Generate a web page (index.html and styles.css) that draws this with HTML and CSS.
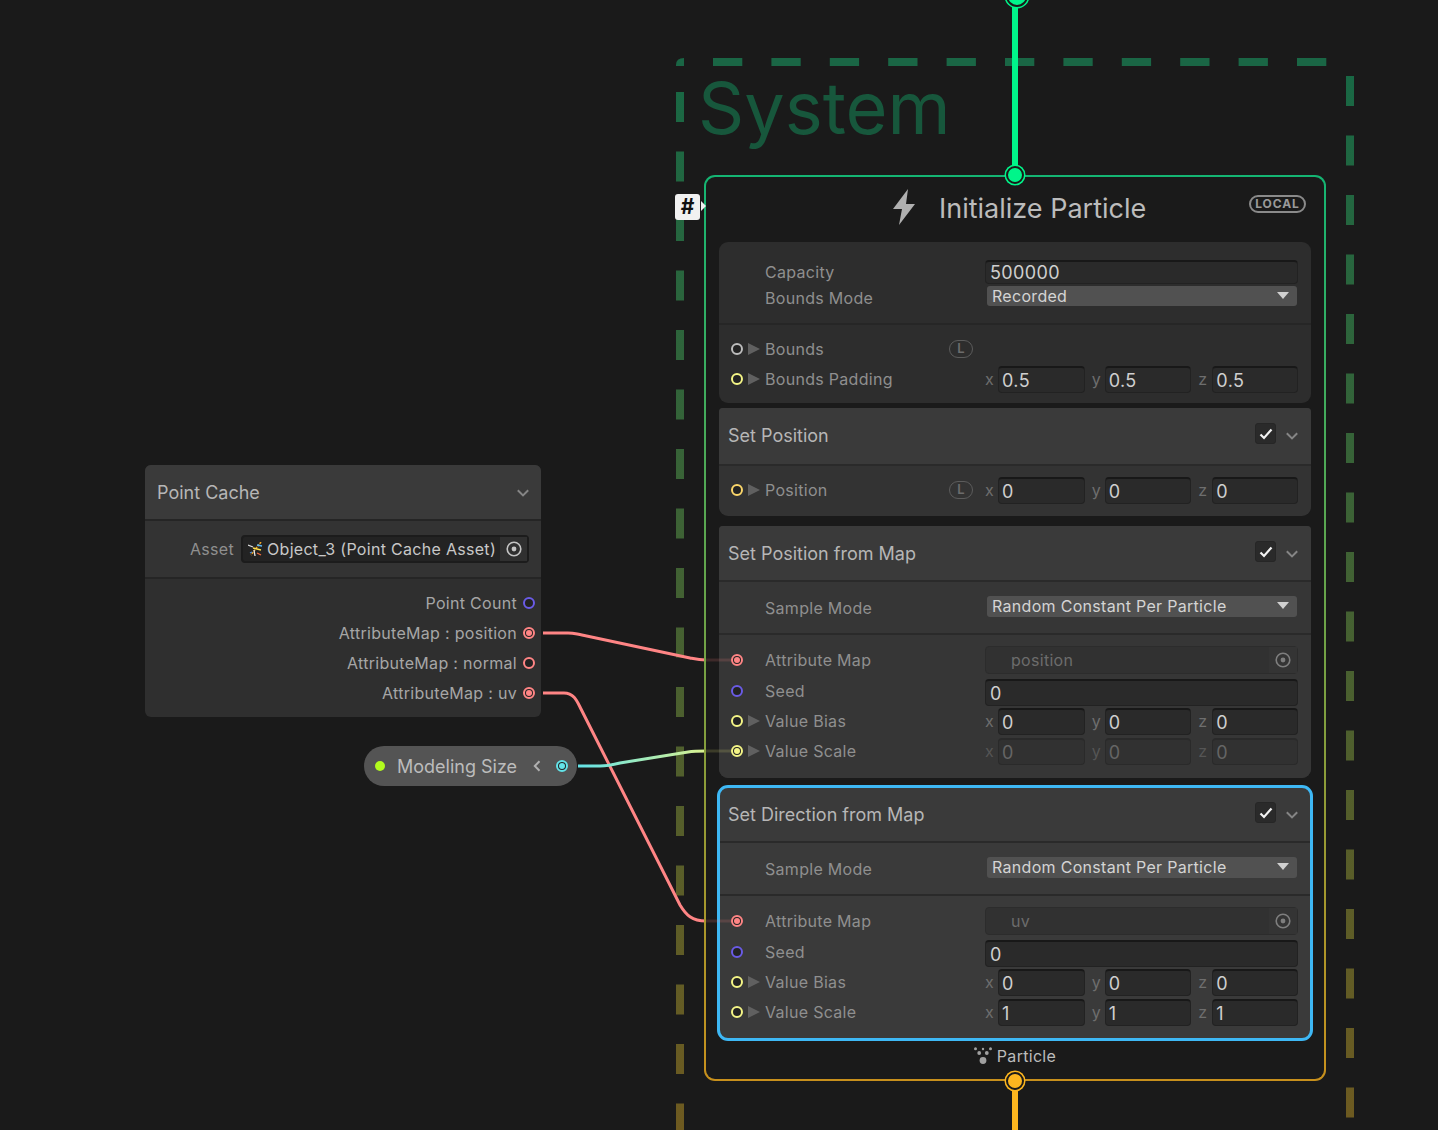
FILE: index.html
```html
<!DOCTYPE html>
<html lang="en">
<head>
<meta charset="utf-8">
<title>Initialize Particle</title>
<link rel="stylesheet" href="styles.css">
</head>
<body>
<main class="canvas">
  <svg class="layer" width="1438" height="1130" viewBox="0 0 1438 1130" fill="none">
    <defs>
      <linearGradient id="frameGrad" gradientUnits="userSpaceOnUse" x1="0" y1="58" x2="0" y2="1130">
        <stop offset="0" stop-color="#176845"/>
        <stop offset="1" stop-color="#6e5a20"/>
      </linearGradient>
      <linearGradient id="sizeWire" gradientUnits="userSpaceOnUse" x1="578" y1="0" x2="730" y2="0">
        <stop offset="0" stop-color="#63e3e8"/>
        <stop offset="1" stop-color="#f2f57f"/>
      </linearGradient>
    </defs>
    <path d="M676 66 V65 Q676 58 684 58 V66 Z" fill="#1a6645"/>
    <path d="M713 62 H1327" stroke="#1a6645" stroke-width="8" stroke-dasharray="29.3 29.1"/>
    <path d="M680 92 V1130" stroke="url(#frameGrad)" stroke-width="8" stroke-dasharray="30 29.5"/>
    <path d="M1350 76 V1130" stroke="url(#frameGrad)" stroke-width="8" stroke-dasharray="30 29.5"/>
    <path class="wire" d="M543 633 H568 C574 633 576 634 582 635 L690 658 C695 659 699 660 706 660" stroke="#ff8585"/>
    <path class="wire" d="M543 693 H564 C574 693 577 701 581 709 L680 905 C686 915 692 921 706 921" stroke="#ff8585"/>
    <path class="wire" d="M578 766 H600 C608 766 612 765 620 763 L688 752 C694 751 699 751 706 751" stroke="url(#sizeWire)"/>
  </svg>

  <h1 class="system-title">System</h1>

  <div class="flow flow-in"></div>
  <div class="flow flow-out"></div>

  <section class="node point-cache">
    <header class="block-title">
      <span class="title-text">Point Cache</span>
      <svg class="chevron" width="12" height="8" viewBox="0 0 12 8" fill="none"><path d="M.8 1.2 6 6.4l5.2-5.2" stroke="#858585" stroke-width="2"/></svg>
    </header>
    <div class="asset-row">
      <span class="label">Asset</span>
      <div class="object-field">
        <svg class="asset-icon" width="15" height="15" viewBox="0 0 15 15" fill="none">
          <path d="M0 3l5 2" stroke="#dcdcdc" stroke-width="1.3"/>
          <path d="M13 0 3 13" stroke="#f5a623" stroke-width="1.5" stroke-dasharray="2.2 1"/>
          <path d="M5 6l8 2" stroke="#ffe14d" stroke-width="1.3"/>
          <path d="M6 8l1 6" stroke="#e8e8e8" stroke-width="1.3"/>
          <path d="M9 3l5 1" stroke="#5bb8f5" stroke-width="1.3"/>
          <path d="M9 11l4 2" stroke="#f56b3c" stroke-width="1.3"/>
          <path d="M2 11l2-1" stroke="#4d8fe0" stroke-width="1.3"/>
        </svg>
        <span class="object-name">Object_3 (Point Cache Asset)</span>
        <span class="object-target">
          <svg width="16" height="16" viewBox="0 0 16 16" fill="none"><circle cx="8" cy="8" r="6.8" stroke="#c4c4c4" stroke-width="1.6"/><circle cx="8" cy="8" r="2.4" fill="#c4c4c4"/></svg>
        </span>
      </div>
    </div>
    <div class="outputs">
      <div class="output"><span>Point Count</span><i class="port p-int"></i></div>
      <div class="output"><span>AttributeMap : position</span><i class="port p-map on"></i></div>
      <div class="output"><span>AttributeMap : normal</span><i class="port p-map"></i></div>
      <div class="output"><span>AttributeMap : uv</span><i class="port p-map on"></i></div>
    </div>
  </section>

  <div class="node pill">
    <i class="pill-dot"></i>
    <span class="pill-text">Modeling Size</span>
    <svg class="pill-chevron" width="8" height="12" viewBox="0 0 8 12" fill="none"><path d="M6.5 1.2 1.8 6l4.7 4.8" stroke="#b0b0b0" stroke-width="2"/></svg>
    <i class="port p-float on"></i>
  </div>

  <section class="node context">
    <header class="context-head">
      <svg class="bolt" width="24" height="36" viewBox="0 0 24 36"><path d="M16 0 1 20h9L7 36 23 15h-9z" fill="#b0b0b0"/></svg>
      <h2 class="context-title">Initialize Particle</h2>
      <span class="local">LOCAL</span>
    </header>

    <div class="block block-settings">
      <div class="sect sect-props">
        <div class="prop"><span class="label">Capacity</span><div class="input input-top">500000</div></div>
        <div class="prop"><span class="label">Bounds Mode</span><div class="select select-thin">Recorded<i class="caret"></i></div></div>
      </div>
      <div class="sect sect-rows">
        <div class="row">
          <i class="port p-bounds"></i><i class="tri"></i><span class="label">Bounds</span><span class="lock">L</span>
        </div>
        <div class="row">
          <i class="port p-vec"></i><i class="tri"></i><span class="label">Bounds Padding</span><span></span>
          <div class="vec">
            <div class="cell"><span class="axis">x</span><div class="input">0.5</div></div>
            <div class="cell"><span class="axis">y</span><div class="input">0.5</div></div>
            <div class="cell"><span class="axis">z</span><div class="input">0.5</div></div>
          </div>
        </div>
      </div>
    </div>

    <div class="block block-position">
      <header class="block-title block-title-tall">
        <span class="title-text">Set Position</span>
        <span class="check"><svg width="14" height="12" viewBox="0 0 14 12" fill="none"><path d="M1.5 6.5 5 10l7.5-8.5" stroke="#f2f2f2" stroke-width="2.2"/></svg></span>
        <svg class="chevron" width="12" height="8" viewBox="0 0 12 8" fill="none"><path d="M.8 1.2 6 6.4l5.2-5.2" stroke="#858585" stroke-width="2"/></svg>
      </header>
      <div class="sect sect-rows sect-single">
        <div class="row">
          <i class="port p-pos"></i><i class="tri"></i><span class="label">Position</span><span class="lock">L</span>
          <div class="vec">
            <div class="cell"><span class="axis">x</span><div class="input">0</div></div>
            <div class="cell"><span class="axis">y</span><div class="input">0</div></div>
            <div class="cell"><span class="axis">z</span><div class="input">0</div></div>
          </div>
        </div>
      </div>
    </div>

    <div class="block block-map">
      <header class="block-title">
        <span class="title-text">Set Position from Map</span>
        <span class="check"><svg width="14" height="12" viewBox="0 0 14 12" fill="none"><path d="M1.5 6.5 5 10l7.5-8.5" stroke="#f2f2f2" stroke-width="2.2"/></svg></span>
        <svg class="chevron" width="12" height="8" viewBox="0 0 12 8" fill="none"><path d="M.8 1.2 6 6.4l5.2-5.2" stroke="#858585" stroke-width="2"/></svg>
      </header>
      <div class="sect sect-props sect-sample">
        <div class="prop"><span class="label">Sample Mode</span><div class="select">Random Constant Per Particle<i class="caret"></i></div></div>
      </div>
      <div class="sect sect-rows sect-map">
        <div class="row">
          <i class="port p-map on"></i><i></i><span class="label">Attribute Map</span><span></span>
          <div class="target-field"><span>position</span><span class="target-btn"><svg width="16" height="16" viewBox="0 0 16 16" fill="none"><circle cx="8" cy="8" r="6.8" stroke="#7e7e7e" stroke-width="1.6"/><circle cx="8" cy="8" r="2.4" fill="#7e7e7e"/></svg></span></div>
        </div>
        <div class="row row-seed">
          <i class="port p-int"></i><i></i><span class="label">Seed</span><span></span>
          <div class="input input-seed">0</div>
        </div>
        <div class="row">
          <i class="port p-vec"></i><i class="tri"></i><span class="label">Value Bias</span><span></span>
          <div class="vec">
            <div class="cell"><span class="axis">x</span><div class="input">0</div></div>
            <div class="cell"><span class="axis">y</span><div class="input">0</div></div>
            <div class="cell"><span class="axis">z</span><div class="input">0</div></div>
          </div>
        </div>
        <div class="row">
          <i class="port p-vec on"></i><i class="tri"></i><span class="label">Value Scale</span><span></span>
          <div class="vec vec-off">
            <div class="cell"><span class="axis">x</span><div class="input">0</div></div>
            <div class="cell"><span class="axis">y</span><div class="input">0</div></div>
            <div class="cell"><span class="axis">z</span><div class="input">0</div></div>
          </div>
        </div>
      </div>
    </div>

    <div class="block block-map block-selected">
      <header class="block-title">
        <span class="title-text">Set Direction from Map</span>
        <span class="check"><svg width="14" height="12" viewBox="0 0 14 12" fill="none"><path d="M1.5 6.5 5 10l7.5-8.5" stroke="#f2f2f2" stroke-width="2.2"/></svg></span>
        <svg class="chevron" width="12" height="8" viewBox="0 0 12 8" fill="none"><path d="M.8 1.2 6 6.4l5.2-5.2" stroke="#858585" stroke-width="2"/></svg>
      </header>
      <div class="sect sect-props sect-sample">
        <div class="prop"><span class="label">Sample Mode</span><div class="select">Random Constant Per Particle<i class="caret"></i></div></div>
      </div>
      <div class="sect sect-rows sect-map">
        <div class="row">
          <i class="port p-map on"></i><i></i><span class="label">Attribute Map</span><span></span>
          <div class="target-field"><span>uv</span><span class="target-btn"><svg width="16" height="16" viewBox="0 0 16 16" fill="none"><circle cx="8" cy="8" r="6.8" stroke="#7e7e7e" stroke-width="1.6"/><circle cx="8" cy="8" r="2.4" fill="#7e7e7e"/></svg></span></div>
        </div>
        <div class="row row-seed">
          <i class="port p-int"></i><i></i><span class="label">Seed</span><span></span>
          <div class="input input-seed">0</div>
        </div>
        <div class="row">
          <i class="port p-vec"></i><i class="tri"></i><span class="label">Value Bias</span><span></span>
          <div class="vec">
            <div class="cell"><span class="axis">x</span><div class="input">0</div></div>
            <div class="cell"><span class="axis">y</span><div class="input">0</div></div>
            <div class="cell"><span class="axis">z</span><div class="input">0</div></div>
          </div>
        </div>
        <div class="row">
          <i class="port p-vec"></i><i class="tri"></i><span class="label">Value Scale</span><span></span>
          <div class="vec">
            <div class="cell"><span class="axis">x</span><div class="input">1</div></div>
            <div class="cell"><span class="axis">y</span><div class="input">1</div></div>
            <div class="cell"><span class="axis">z</span><div class="input">1</div></div>
          </div>
        </div>
      </div>
    </div>

    <footer class="context-foot">
      <svg width="18" height="18" viewBox="0 0 18 18" fill="#a0a0a0">
        <circle cx="1.5" cy="1.8" r="1.5"/><circle cx="9" cy="2" r="1.2"/><circle cx="16.5" cy="1.8" r="1.5"/>
        <circle cx="5.2" cy="6" r="1.9"/><circle cx="12.8" cy="6" r="1.9"/>
        <circle cx="9" cy="13.5" r="3.4"/>
      </svg>
      <span>Particle</span>
    </footer>

    <i class="flow-port flow-port-in"></i>
    <i class="flow-port flow-port-out"></i>
    <div class="hash">#</div>
  </section>

  <svg class="layer layer-top" width="1438" height="1130" viewBox="0 0 1438 1130" fill="none">
    <path d="M706 660 H731" stroke="#ff8585" stroke-opacity=".16" stroke-width="3"/>
    <path d="M706 751 H731" stroke="#f2f57f" stroke-opacity=".16" stroke-width="3"/>
    <path d="M706 921 H731" stroke="#ff8585" stroke-opacity=".16" stroke-width="3"/>
  </svg>
</main>
</body>
</html>
```
FILE: styles.css
```css
* { box-sizing: border-box; }

html, body {
  margin: 0;
  height: 100%;
  background: #1a1a1a;
}

body {
  font-family: Inter, "Noto Sans", "Liberation Sans", sans-serif;
  font-size: 16px;
  letter-spacing: 0.3px;
  color: #8f8f8f;
  overflow: hidden;
}

i { display: block; font-style: normal; }

.canvas {
  position: relative;
  width: 1438px;
  height: 1130px;
  overflow: hidden;
}

.layer { position: absolute; left: 0; top: 0; }
.layer-top { pointer-events: none; }
.wire { stroke-width: 3; }

.system-title {
  position: absolute;
  left: 698px;
  top: 63px;
  margin: 0;
  font-size: 72px;
  line-height: 90px;
  font-weight: 400;
  letter-spacing: 0;
  color: #17573c;
}

.flow { position: absolute; left: 1012px; width: 6px; }
.flow-in { top: 0; height: 175px; background: #00f58a; }
.flow-in::after {
  content: "";
  position: absolute;
  left: -6px;
  top: -15px;
  width: 18px;
  height: 18px;
  border-radius: 50%;
  border: 2px solid #1a1a1a;
  background: #00f58a;
  box-shadow: 0 0 0 1.5px #00f58a;
}
.flow-out { top: 1081px; height: 49px; background: #fdb61f; }

.node { position: absolute; }

/* Point cache operator */
.point-cache {
  left: 145px;
  top: 465px;
  width: 396px;
  border-radius: 6px;
  overflow: hidden;
  background: #2f2f2f;
}

.block-title {
  display: flex;
  align-items: center;
  height: 54px;
  padding: 0 13px 0 9px;
  background: #3a3a3a;
}
.point-cache .block-title { padding: 0 12px; }

.title-text {
  flex: 1;
  font-size: 18px;
  letter-spacing: 0;
  color: #b6b6b6;
}

.chevron { flex: none; margin-top: 2px; }

.asset-row {
  display: flex;
  align-items: center;
  justify-content: flex-end;
  gap: 7px;
  height: 60px;
  padding: 0 12px;
  background: #333;
  border-top: 2px solid #252525;
  border-bottom: 2px solid #252525;
}

.object-field {
  display: flex;
  align-items: center;
  width: 288px;
  height: 28px;
  padding-left: 5px;
  background: #232323;
  border: 2px solid #1c1c1c;
  border-radius: 4px;
  color: #c8c8c8;
}
.asset-icon { flex: none; margin-right: 4px; }
.object-name { flex: 1; white-space: nowrap; }
.object-target {
  display: flex;
  align-items: center;
  justify-content: center;
  flex: none;
  width: 27px;
  height: 24px;
  background: #303030;
}

.outputs { padding: 9px 6px 9px 0; }
.output {
  display: flex;
  align-items: center;
  justify-content: flex-end;
  gap: 6px;
  height: 30px;
  color: #a6a6a6;
}

/* Ports */
.port {
  position: relative;
  flex: none;
  width: 12px;
  height: 12px;
  border-radius: 50%;
  border: 2px solid currentColor;
  background: #232323;
}
.port.on::after {
  content: "";
  position: absolute;
  inset: 1px;
  border-radius: 50%;
  background: currentColor;
}
.p-int { color: #6a5be6; }
.p-map { color: #ff8585; }
.p-bounds { color: #bdbdbd; }
.p-vec { color: #f4f586; }
.p-pos { color: #fbd66a; }
.p-float { color: #63e3e8; }

/* Pill */
.pill {
  left: 364px;
  top: 746px;
  display: flex;
  align-items: center;
  width: 213px;
  height: 40px;
  padding: 0 9px 0 11px;
  border-radius: 20px;
  background: #545454;
}
.pill-dot {
  flex: none;
  width: 10px;
  height: 10px;
  margin-top: -1px;
  border-radius: 50%;
  background: #b2fb1e;
}
.pill-text {
  flex: none;
  width: 136px;
  margin-left: 12px;
  font-size: 18px;
  letter-spacing: 0;
  color: #bcbcbc;
}
.pill-chevron { flex: none; margin-right: 15px; }

/* Context */
.context {
  left: 704px;
  top: 175px;
  width: 622px;
  height: 906px;
  display: flex;
  flex-direction: column;
  padding: 0 13px;
  border: 2px solid transparent;
  border-radius: 11px;
  background:
    linear-gradient(#1a1a1a, #1a1a1a) padding-box,
    linear-gradient(#14b573, #c8901c) border-box;
}

.context-head {
  position: relative;
  flex: none;
  display: flex;
  align-items: center;
  height: 65px;
}
.bolt { position: absolute; left: 173px; top: 12px; }
.context-title {
  position: absolute;
  left: 220px;
  top: 15px;
  margin: 0;
  font-size: 27px;
  line-height: 34px;
  font-weight: 400;
  letter-spacing: 0;
  color: #bcbcbc;
  white-space: nowrap;
}
.local {
  position: absolute;
  right: 5px;
  top: 18px;
  width: 57px;
  height: 18px;
  border: 2px solid #8a8a8a;
  border-radius: 9px;
  font-size: 12px;
  line-height: 14px;
  font-weight: 700;
  letter-spacing: 0.9px;
  text-align: center;
  color: #9a9a9a;
}

.block {
  flex: none;
  border-radius: 4px 4px 9px 9px;
  background: #333;
  overflow: hidden;
}
.block-settings { background: #2d2d2d; border-radius: 9px; }
.block-position { margin-top: 5px; }
.block-map { margin-top: 10px; }
.block-selected {
  margin-top: 9px;
  overflow: visible;
  border-radius: 9px;
  background: #383838;
  outline: 3px solid #3eb8f5;
  outline-offset: -1px;
}
.block-map .sect { background: #363636; }
.block-selected .sect, .block-selected .block-title { background: #3a3a3a; }
.block-selected .block-title { border-radius: 9px 9px 0 0; }
.block-selected .sect-map { border-radius: 0 0 9px 9px; }

.block-title-tall { height: 56px; padding-bottom: 2px; }

.check {
  display: flex;
  align-items: center;
  justify-content: center;
  flex: none;
  width: 21px;
  height: 21px;
  margin: -3px 10px 0 0;
  border-radius: 3px;
  border: 1px solid #262626;
  background: #2a2a2a;
}

.sect + .sect,
.block-title + .sect { border-top: 2px solid #2a2a2a; }
.block-settings .sect + .sect { border-top-color: #262626; }

.sect-props { padding: 17px 13px 12px 46px; }
.sect-sample { padding-top: 13px; }
.sect-rows { padding: 9px 13px 9px 12px; }
.sect-single { padding-bottom: 11px; }
.sect-map { padding-top: 10px; padding-bottom: 12px; }

.prop {
  display: grid;
  grid-template-columns: 220px 1fr;
  height: 26px;
  align-items: center;
}
.label { white-space: nowrap; }

.input {
  height: 27px;
  padding: 1px 3px 0;
  overflow: hidden;
  background: #2a2a2a;
  border: 1px solid #222;
  border-top: 2px solid #181818;
  border-radius: 4px;
  font-size: 18px;
  line-height: 23px;
  letter-spacing: 0.4px;
  color: #cfcfcf;
}
.input-top {
  height: 24px;
  padding: 0 4px;
  line-height: 22px;
  margin-top: -1px;
}
.input-seed { margin: 2px 0 0 12px; padding: 1px 4px 0; }

.select {
  position: relative;
  align-self: start;
  height: 21px;
  margin: 1px 1px 0 2px;
  padding: 0 5px;
  background: #515151;
  border-radius: 3px;
  line-height: 21px;
  color: #d4d4d4;
}
.select-thin { height: 20px; line-height: 20px; }
.caret {
  position: absolute;
  right: 8px;
  top: 6px;
  width: 0;
  height: 0;
  border-left: 6px solid transparent;
  border-right: 6px solid transparent;
  border-top: 7px solid #d0d0d0;
}

.row {
  display: grid;
  grid-template-columns: 12px 22px 184px 24px 1fr;
  align-items: center;
  height: 30px;
}
.row-seed { margin-top: 1px; }

.tri {
  justify-self: start;
  margin-left: 5px;
  width: 0;
  height: 0;
  border-top: 6.5px solid transparent;
  border-bottom: 6.5px solid transparent;
  border-left: 12px solid #606060;
}

.lock {
  display: block;
  height: 18px;
  border: 1.5px solid #5c5c5c;
  border-radius: 9px;
  font-size: 13px;
  line-height: 15px;
  font-weight: 600;
  letter-spacing: 0;
  text-align: center;
  color: #6c6c6c;
}

.vec {
  display: flex;
  gap: 7px;
  margin-left: 12px;
}
.cell { display: flex; flex: 1; align-items: center; min-width: 0; }
.axis { flex: none; width: 13px; color: #6e6e6e; }
.cell:last-child .axis { width: 14px; }
.cell .input { flex: 1; min-width: 0; }

.vec-off .input {
  background: #313131;
  border: 1px solid #2a2a2a;
  border-top: 2px solid #2a2a2a;
  color: #656565;
}
.vec-off .axis { color: #555; }

.target-field {
  display: flex;
  align-items: center;
  justify-content: space-between;
  height: 28px;
  margin-left: 12px;
  padding-left: 25px;
  background: #313131;
  border: 1px solid #2c2c2c;
  border-radius: 4px;
  color: #6c6c6c;
}
.target-btn {
  display: flex;
  align-items: center;
  justify-content: center;
  width: 28px;
  height: 26px;
  background: #343434;
}

.context-foot {
  display: flex;
  align-items: center;
  justify-content: center;
  gap: 5px;
  height: 32px;
  margin-top: 1px;
  color: #bcbcbc;
}

.flow-port {
  position: absolute;
  left: 300px;
  width: 18px;
  height: 18px;
  border-radius: 50%;
  border: 2px solid #1a1a1a;
}
.flow-port-in { top: -11px; background: #00f58a; box-shadow: 0 0 0 1.5px #00f58a; }
.flow-port-out { bottom: -11px; background: #fdb61f; box-shadow: 0 0 0 1.5px #fdb61f; }

.hash {
  position: absolute;
  left: -31px;
  top: 17px;
  width: 25px;
  height: 26px;
  border-radius: 3px;
  background: #f1f1f1;
  font-size: 21px;
  line-height: 26px;
  font-weight: 700;
  letter-spacing: 0;
  text-align: center;
  color: #111;
}
.hash::after {
  content: "";
  position: absolute;
  left: 26px;
  top: 7px;
  width: 0;
  height: 0;
  border-top: 5px solid transparent;
  border-bottom: 5px solid transparent;
  border-left: 5px solid #f1f1f1;
}
```
